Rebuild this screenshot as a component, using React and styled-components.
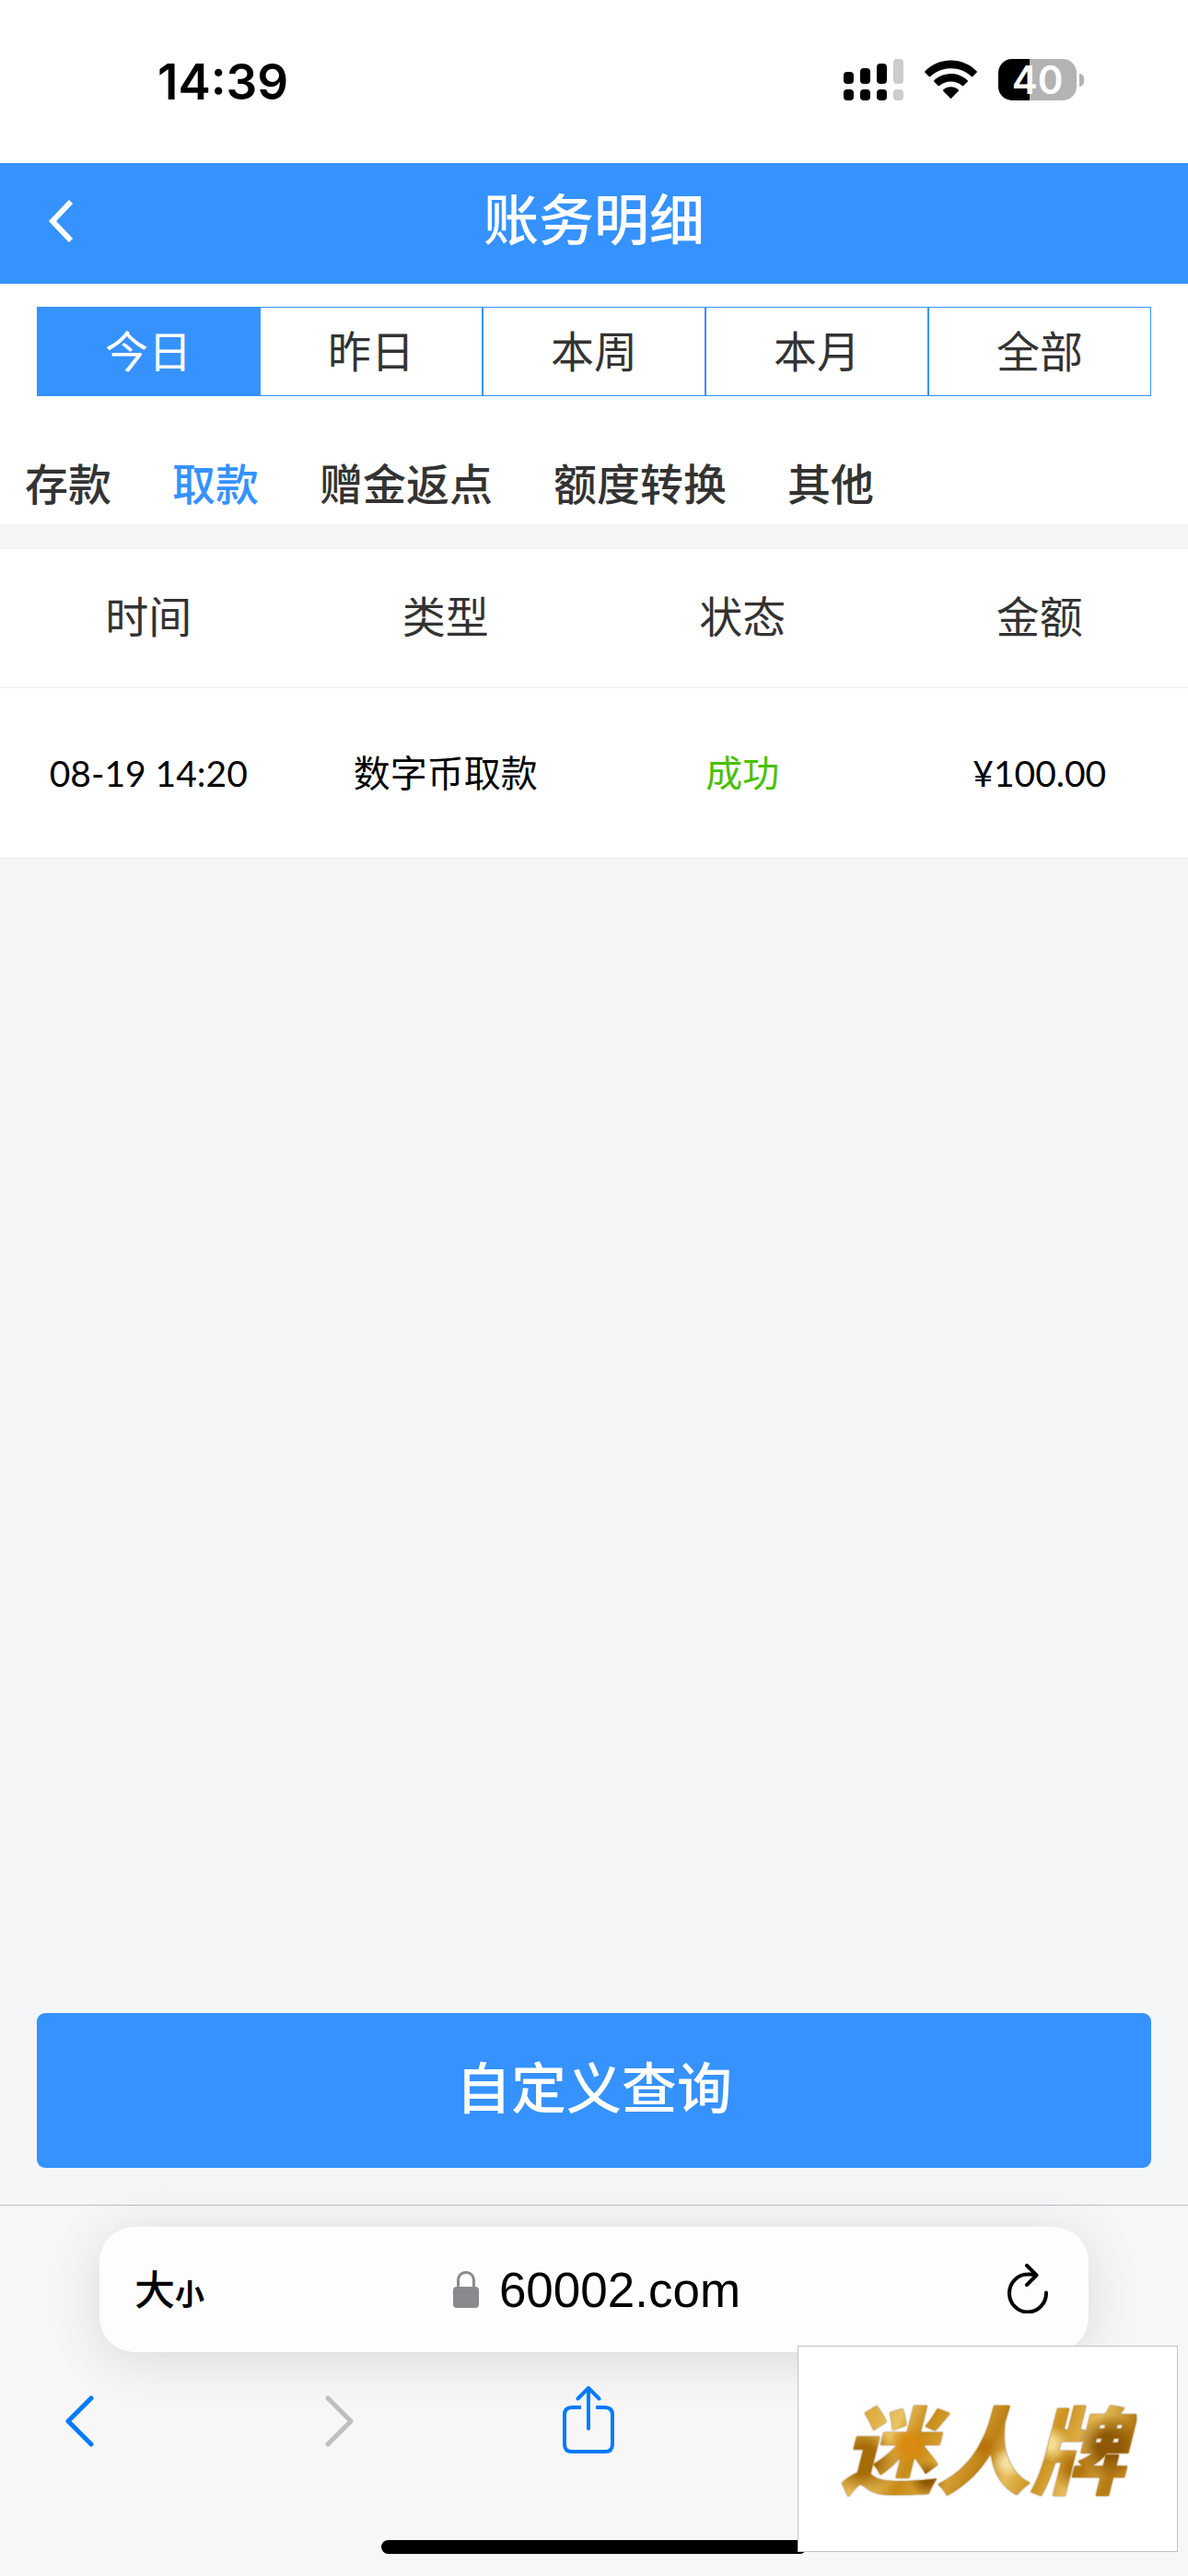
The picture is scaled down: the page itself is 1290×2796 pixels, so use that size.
import React, { useState } from 'react'
import styled, { createGlobalStyle } from 'styled-components'

const GlobalStyle = createGlobalStyle`
  * {
    box-sizing: border-box;
  }
  body {
    margin: 0;
    background: #f4f6f8;
    font-family: "Noto Sans CJK SC", sans-serif;
    color: #333;
  }
  button {
    border: none;
    background: none;
    padding: 0;
    font: inherit;
    color: inherit;
    cursor: pointer;
  }
  svg {
    display: block;
    fill: none;
  }
`

const Page = styled.div`
  position: relative;
  display: flex;
  flex-direction: column;
  min-height: 100vh;
`

const StatusBar = styled.div`
  display: flex;
  align-items: center;
  justify-content: space-between;
  height: 177px;
  padding: 0 113px 4px 171px;
  background: white;
`

const Clock = styled.span`
  padding-top: 4px;
  font-family: Inter, sans-serif;
  font-size: 53px;
  font-weight: 600;
  color: black;
`

const StatusIcons = styled.div`
  display: flex;
  align-items: center;
  gap: 23px;
`

const BatteryWrap = styled.div`
  display: flex;
  align-items: center;
  gap: 3px;
`

const Battery = styled.div`
  width: 85px;
  height: 45px;
  border-radius: 15px;
  background: linear-gradient(90deg, black 40%, #b3b3b3 40%);
  color: white;
  font-family: Inter, sans-serif;
  font-size: 42px;
  font-weight: 600;
  line-height: 45px;
  text-align: center;
`

const BatteryTip = styled.div`
  width: 5px;
  height: 14px;
  border-radius: 0 5px 5px 0;
  background: #b3b3b3;
`

const Header = styled.header`
  display: grid;
  grid-template-columns: 120px 1fr 120px;
  align-items: center;
  height: 131px;
  padding-bottom: 15px;
  background: #3592ff;
  color: white;

  h1 {
    margin: 0;
    font-size: 60px;
    font-weight: 500;
    line-height: 80px;
    text-align: center;
  }
`

const BackButton = styled.button`
  padding: 10px 0 0 52px;
`

const Filters = styled.section`
  background: white;
  padding: 25px 0 15px;
`

const RangeTabs = styled.div`
  display: flex;
  height: 97px;
  margin: 0 40px;
  border: 1px solid #3592ff;
`

const RangeTab = styled.button`
  flex: 1;
  padding-bottom: 6px;
  font-size: 47px;
  color: ${props => props.$active ? 'white' : '#333'};
  background: ${props => props.$active ? '#3592ff' : 'white'};
  line-height: 89px;

  & + & {
    border-left: 2px solid #3592ff;
  }
`

const KindTabs = styled.nav`
  display: flex;
  gap: 66px;
  margin-top: 62px;
  padding: 0 27px;
`

const KindTab = styled.button`
  font-size: 47px;
  font-weight: 500;
  line-height: 62px;
  color: ${props => props.$active ? '#3592ff' : '#333'};
`

const Records = styled.table`
  width: 100%;
  margin-top: 27px;
  border-collapse: collapse;
  table-layout: fixed;
  background: white;

  tr {
    border-bottom: 1px solid #eee;
  }
  th {
    height: 150px;
    padding: 0 0 8px;
    font-size: 47px;
    font-weight: 400;
  }
  td {
    height: 185px;
    padding: 0 0 4px;
    font-size: 40px;
    text-align: center;
    color: black;
  }
`

const Figures = styled.span`
  font-family: Lato, sans-serif;
  font-size: 39px;
`

const Success = styled.span`
  color: #49c000;
`

const QueryButton = styled.button`
  height: 168px;
  margin: auto 40px 40px;
  padding-bottom: 14px;
  border-radius: 9px;
  background: #3592ff;
  color: white;
  font-size: 60px;
  font-weight: 500;
`

const BrowserBar = styled.footer`
  border-top: 1px solid #bcbcbf;
  background: #f7f7f7;
  padding: 23px 0 24px;
`

const AddressBar = styled.div`
  display: grid;
  grid-template-columns: 1fr auto 1fr;
  align-items: center;
  height: 136px;
  margin: 0 108px;
  padding: 0 38px;
  border-radius: 38px;
  background: #fdfdfd;
  box-shadow: 0 8px 60px rgba(0, 0, 0, 0.12);
  color: black;
`

const TextSize = styled.button`
  justify-self: start;
  padding-bottom: 4px;
  font-size: 44px;
  font-weight: 500;

  small {
    font-size: 32px;
    font-weight: 700;
  }
`

const Site = styled.a`
  display: flex;
  align-items: center;
  gap: 22px;
  padding-left: 6px;
  font-family: "Liberation Sans", sans-serif;
  font-size: 53px;
  color: black;
  text-decoration: none;
`

const ReloadButton = styled.button`
  justify-self: end;
  padding: 0 6px 2px 0;
`

const Toolbar = styled.div`
  display: flex;
  align-items: center;
  justify-content: space-between;
  height: 148px;
  padding: 0 47px 0 71px;
  color: #007aff;
`

const HistoryButtons = styled.div`
  display: flex;
  gap: 251px;
  padding-top: 2px;

  button:disabled {
    color: #bfbfbf;
  }
`

const HomeIndicator = styled.div`
  width: 462px;
  height: 15px;
  margin: 56px auto 0;
  border-radius: 8px;
  background: black;
`

const Brand = styled.div`
  position: absolute;
  right: 11px;
  bottom: 26px;
  display: flex;
  align-items: center;
  justify-content: center;
  width: 413px;
  height: 224px;
  padding: 0 10px 6px 0;
  border: 1px solid #c2c2c2;
  background: white;
`

const BrandText = styled.span`
  padding: 0 12px;
  font-size: 103px;
  font-weight: 900;
  font-style: italic;
  line-height: 150px;
  color: transparent;
  background:
    radial-gradient(circle at 26% 50%, #d98a10 0 3%, transparent 9%),
    radial-gradient(circle at 50% 50%, #b8720a 0 2%, transparent 8%),
    radial-gradient(circle at 58% 62%, #f6e0a0 0 2%, transparent 8%),
    radial-gradient(circle at 72% 48%, #f6dd90 0 2%, transparent 8%),
    radial-gradient(circle at 91% 50%, #8f5806 0 4%, transparent 11%),
    radial-gradient(circle at 80% 66%, #b3760f 0 3%, transparent 9%),
    radial-gradient(circle at 32% 74%, #8f5604 0 2%, transparent 8%),
    radial-gradient(circle at 11% 60%, #a56c08 0 5%, transparent 12%),
    linear-gradient(115deg, #b07a14, #dca93a 14%, #e9c262 24%, #c78a18 32%, #e0ac3c 42%, #bd8016 52%, #e6bc58 60%, #cb921f 68%, #e6bc58 78%, #b57a14 88%, #d9a436);
  background-clip: text;
  -webkit-background-clip: text;
  filter: drop-shadow(0 0 1px #8a5a10);
`

const SignalIcon = () => (
  <svg width="65" height="45" viewBox="0 0 65 45">
    <g fill="black">
      <rect x="0" y="14" width="11" height="13" rx="4" />
      <rect x="18" y="10" width="11" height="17" rx="4" />
      <rect x="36" y="5" width="11" height="22" rx="4" />
      <rect x="0" y="33" width="11" height="12" rx="4" />
      <rect x="18" y="33" width="11" height="12" rx="4" />
      <rect x="36" y="33" width="11" height="12" rx="4" />
    </g>
    <g fill="#ccc">
      <rect x="54" y="0" width="11" height="27" rx="4" />
      <rect x="54" y="33" width="11" height="12" rx="4" />
    </g>
  </svg>
)

const WifiIcon = () => (
  <svg width="57" height="43" viewBox="0 0 57 43">
    <path fill="black" d="M28.500 0.500C39.500 0.500 49.500 5 56.500 12.200Q57.300 13 56.500 13.800L52.300 18Q51.500 18.700 50.700 18C45 12.500 37.200 9.200 28.500 9.200S12 12.500 6.300 18Q5.500 18.700 4.700 18L0.500 13.800Q-0.300 13 0.500 12.200C7.500 5 17.500 0.500 28.500 0.500Z" />
    <path fill="black" d="M28.500 15C35.500 15 41.800 17.700 46.600 22.200Q47.400 23 46.600 23.800L42.300 28Q41.500 28.700 40.700 28C37.500 25 33.200 23.400 28.500 23.400S19.500 25 16.300 28Q15.500 28.700 14.700 28L10.400 23.800Q9.600 23 10.400 22.200C15.200 17.700 21.500 15 28.500 15Z" />
    <path fill="black" d="M28.500 29.200C31.500 29.200 34.400 30.300 36.600 32.200Q37.500 33 36.600 33.900L29.300 41.600Q28.500 42.400 27.700 41.600L20.400 33.900Q19.500 33 20.400 32.200C22.600 30.300 25.500 29.200 28.500 29.200Z" />
  </svg>
)

const LockIcon = () => (
  <svg width="28" height="40" viewBox="0 0 28 40">
    <rect x="0" y="17" width="28" height="23" rx="4" fill="#8a8a8e" />
    <path d="M5.500 18V11C5.500 5 9 1.500 14 1.500S22.500 5 22.500 11V18" stroke="#8a8a8e" strokeWidth="3" />
  </svg>
)

const ReloadIcon = () => (
  <svg width="44" height="54" viewBox="0 0 44 54" stroke="black" strokeWidth="4" strokeLinecap="round" strokeLinejoin="round">
    <path d="M42 31.500A20 20.500 0 1 1 22 11.500Q26.500 11.200 31 12.500" />
    <path d="M21 2L31.500 12.500L21 23" />
  </svg>
)

const Chevron = ({ flip }) => (
  <svg width="31" height="56" viewBox="0 0 31 56" stroke="currentColor" strokeWidth="5" strokeLinecap="round" strokeLinejoin="round">
    <path d={flip ? 'M3 3L28 28L3 53' : 'M28 3L3 28L28 53'} />
  </svg>
)

const ShareIcon = () => (
  <svg width="56" height="74" viewBox="0 0 56 74" stroke="currentColor" strokeWidth="4" strokeLinecap="round" strokeLinejoin="round">
    <path strokeLinecap="butt" d="M20 23H10Q2 23 2 31V63Q2 71 10 71H46Q54 71 54 63V31Q54 23 46 23H36" />
    <path d="M28 46V2M16.500 13.500L28 2L39.500 13.500" />
  </svg>
)

const BookIcon = () => (
  <svg width="66" height="52" viewBox="0 0 66 52" stroke="currentColor" strokeWidth="4" strokeLinejoin="round">
    <path d="M33 8Q18 -2 2 6V48Q18 41 33 50Q48 41 64 48V6Q48 -2 33 8ZM33 8V50" />
  </svg>
)

const PagesIcon = () => (
  <svg width="56" height="56" viewBox="0 0 56 56" stroke="currentColor" strokeWidth="4" strokeLinejoin="round">
    <rect x="2" y="14" width="40" height="40" rx="7" />
    <path d="M14 14V9Q14 2 21 2H47Q54 2 54 9V35Q54 42 47 42H42" />
  </svg>
)

const ranges = ['今日', '昨日', '本周', '本月', '全部']
const kinds = ['存款', '取款', '赠金返点', '额度转换', '其他']
const records = [
  { time: '08-19 14:20', type: '数字币取款', status: '成功', amount: '¥100.00' },
]

const App = () => {
  const [range, setRange] = useState('今日')
  const [kind, setKind] = useState('取款')

  return (
    <Page>
      <GlobalStyle />
      <StatusBar>
        <Clock>14:39</Clock>
        <StatusIcons>
          <SignalIcon />
          <WifiIcon />
          <BatteryWrap>
            <Battery>40</Battery>
            <BatteryTip />
          </BatteryWrap>
        </StatusIcons>
      </StatusBar>

      <Header>
        <BackButton aria-label="返回">
          <svg width="28" height="46" viewBox="0 0 28 46" stroke="white" strokeWidth="6">
            <path d="M25 2L5 23L25 44" />
          </svg>
        </BackButton>
        <h1>账务明细</h1>
      </Header>

      <Filters>
        <RangeTabs>
          {ranges.map(item => (
            <RangeTab key={item} $active={item === range} onClick={() => setRange(item)}>{item}</RangeTab>
          ))}
        </RangeTabs>
        <KindTabs>
          {kinds.map(item => (
            <KindTab key={item} $active={item === kind} onClick={() => setKind(item)}>{item}</KindTab>
          ))}
        </KindTabs>
      </Filters>

      <Records>
        <thead>
          <tr>
            <th>时间</th>
            <th>类型</th>
            <th>状态</th>
            <th>金额</th>
          </tr>
        </thead>
        <tbody>
          {records.map(record => (
            <tr key={record.time}>
              <td><Figures>{record.time}</Figures></td>
              <td>{record.type}</td>
              <td><Success>{record.status}</Success></td>
              <td><Figures>{record.amount}</Figures></td>
            </tr>
          ))}
        </tbody>
      </Records>

      <QueryButton>自定义查询</QueryButton>

      <BrowserBar>
        <AddressBar>
          <TextSize>大<small>小</small></TextSize>
          <Site href="#">
            <LockIcon />
            60002.com
          </Site>
          <ReloadButton aria-label="刷新"><ReloadIcon /></ReloadButton>
        </AddressBar>
        <Toolbar>
          <HistoryButtons>
            <button aria-label="后退"><Chevron /></button>
            <button aria-label="前进" disabled><Chevron flip /></button>
          </HistoryButtons>
          <button aria-label="分享"><ShareIcon /></button>
          <button aria-label="书签"><BookIcon /></button>
          <button aria-label="标签页"><PagesIcon /></button>
        </Toolbar>
        <HomeIndicator />
      </BrowserBar>

      <Brand>
        <BrandText>迷人牌</BrandText>
      </Brand>
    </Page>
  )
}

export default App
